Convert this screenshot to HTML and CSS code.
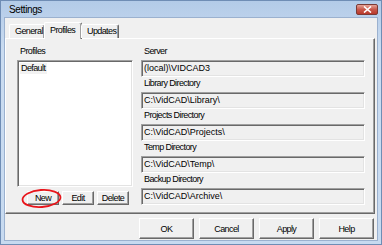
FILE: index.html
```html
<!DOCTYPE html>
<html lang="en">
<head>
  <meta charset="UTF-8" />
  <title>Settings</title>
  <link rel="stylesheet" href="styles.css">
</head>
<body>
  <div class="window">
    <div class="titlebar">
      <span class="title">Settings</span>
      <button class="close" aria-label="Close">
        <svg width="9" height="7" viewBox="0 0 9 7">
          <path d="M1 0.5 L8 6.5 M8 0.5 L1 6.5" stroke="#fff" stroke-width="1.6" />
        </svg>
      </button>
    </div>

    <div class="client">
      <div class="tabs">
        <div class="tab">General</div>
        <div class="tab active">Profiles</div>
        <div class="tab">Updates</div>
      </div>

      <div class="panel">
        <div class="profiles">
          <div class="label">Profiles</div>
          <div class="listbox">
            <div class="item">Default</div>
          </div>
          <div class="list-buttons">
            <div class="btn-wrap">
              <button class="btn small">New</button>
              <svg class="mark" width="42" height="21" viewBox="0 0 42 21">
                <ellipse cx="20.5" cy="10.5" rx="19" ry="8.5" fill="none" stroke="#e8151b" stroke-width="1.8" transform="rotate(-4 20.5 10.5)" />
              </svg>
            </div>
            <button class="btn small">Edit</button>
            <button class="btn small">Delete</button>
          </div>
        </div>

        <div class="fields">
          <div class="group">
            <div class="label">Server</div>
            <div class="field">(local)\VIDCAD3</div>
          </div>
          <div class="group">
            <div class="label">Library Directory</div>
            <div class="field">C:\VidCAD\Library\</div>
          </div>
          <div class="group">
            <div class="label">Projects Directory</div>
            <div class="field">C:\VidCAD\Projects\</div>
          </div>
          <div class="group">
            <div class="label">Temp Directory</div>
            <div class="field">C:\VidCAD\Temp\</div>
          </div>
          <div class="group">
            <div class="label">Backup Directory</div>
            <div class="field">C:\VidCAD\Archive\</div>
          </div>
        </div>
      </div>

      <div class="dialog-buttons">
        <button class="btn">OK</button>
        <button class="btn">Cancel</button>
        <button class="btn">Apply</button>
        <button class="btn">Help</button>
      </div>
    </div>
  </div>
</body>
</html>
```

FILE: styles.css
```css
* {
  margin: 0;
  padding: 0;
  box-sizing: border-box;
}

body {
  font-family: 'Liberation Sans', Arial, sans-serif;
  font-size: 9px;
  letter-spacing: -0.6px;
  color: #000;
  background: #fff;
}

.window {
  width: 382px;
  height: 245px;
  display: flex;
  flex-direction: column;
  border: 1px solid #6f8db5;
  background: linear-gradient(#b3cbe8, #cadcf1 20%, #c7daf0);
  padding: 0 3px 3px;
}

.titlebar {
  height: 16px;
  display: flex;
  align-items: center;
  justify-content: space-between;
  padding-left: 5px;
}

.title {
  font-size: 10px;
  letter-spacing: -0.4px;
}

.close {
  width: 22px;
  height: 11px;
  margin-top: 1px;
  border: 1px solid #7b3a35;
  border-radius: 2px;
  background: linear-gradient(#e6a397, #c8574a 50%, #b8382a);
  display: flex;
  align-items: center;
  justify-content: center;
}

.client {
  flex: 1;
  background: #f0f0f0;
  border: 1px solid #9bb1cf;
  display: flex;
  flex-direction: column;
}

.tabs {
  display: flex;
  align-items: flex-end;
  height: 16px;
  margin-top: 4px;
  padding-left: 4px;
  position: relative;
  z-index: 1;
}

.tab {
  height: 14px;
  padding: 0 5px;
  line-height: 13px;
  border: 1px solid #fff;
  border-right-color: #696969;
  border-bottom: none;
  box-shadow: inset -1px 0 0 #a0a0a0;
  border-radius: 2px 2px 0 0;
}

.tab:first-child {
  width: 36px;
}

.tab.active {
  height: 17px;
  width: 38px;
  margin: 0 -1px -1px;
  padding-left: 5px;
  line-height: 14px;
  background: #f0f0f0;
}

.tab:last-child {
  width: 38px;
}

.panel {
  height: 176px;
  margin-right: 2px;
  border: 1px solid;
  border-color: #fff #696969 #696969 #fff;
  box-shadow: inset -1px -1px 0 #a0a0a0;
  display: flex;
  gap: 8px;
  padding: 6px 9px 0 11px;
}

.label {
  height: 15px;
  line-height: 13px;
  padding-left: 3px;
}

.profiles {
  width: 116px;
  display: flex;
  flex-direction: column;
}

.listbox {
  height: 127px;
  background: #fff;
  border: 1px solid;
  border-color: #a0a0a0 #fff #fff #a0a0a0;
  box-shadow: inset 1px 1px 0 #696969, inset -1px -1px 0 #e3e3e3;
  padding: 2px 2px;
}

.item {
  display: inline-block;
  padding: 0 2px 0 1px;
  line-height: 11px;
  background: #f2f2f2;
}

.list-buttons {
  display: flex;
  justify-content: flex-end;
  gap: 3px;
  padding-right: 4px;
  margin-top: 4px;
}

.btn-wrap {
  position: relative;
}

.mark {
  position: absolute;
  left: -6px;
  top: -3px;
  pointer-events: none;
}

.btn {
  width: 55px;
  height: 21px;
  font: inherit;
  letter-spacing: inherit;
  background: #f0f0f0;
  border: 1px solid;
  border-color: #fff #696969 #696969 #fff;
  box-shadow: inset -1px -1px 0 #a0a0a0;
}

.btn.small {
  width: 32px;
  height: 14px;
  line-height: 10px;
}

.fields {
  flex: 1;
  display: flex;
  flex-direction: column;
}

.group {
  height: 32px;
}

.field {
  height: 17px;
  border: 1px solid;
  border-color: #a0a0a0 #fff #fff #a0a0a0;
  box-shadow: inset 1px 1px 0 #696969, inset -1px -1px 0 #e3e3e3;
  padding: 2px 0 0 2px;
  letter-spacing: 0;
  white-space: nowrap;
}

.dialog-buttons {
  display: flex;
  justify-content: flex-end;
  gap: 5px;
  margin: 4px 3px 0 0;
}
```
